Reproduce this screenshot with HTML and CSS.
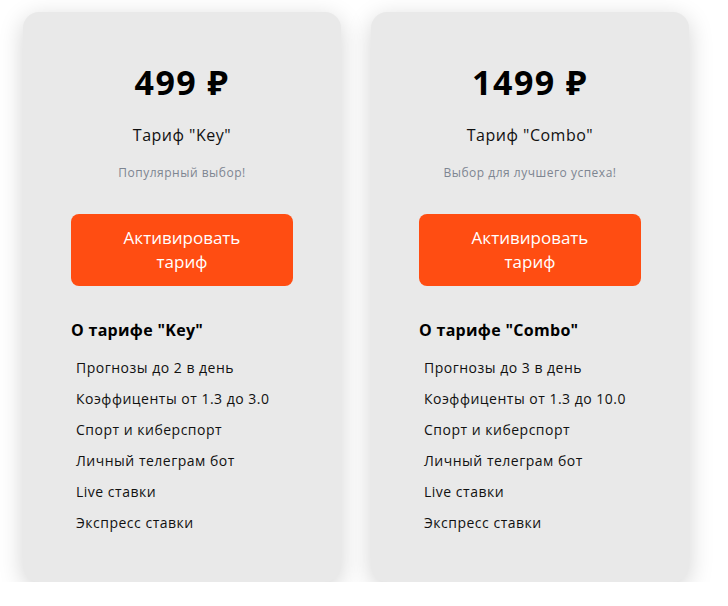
FILE: index.html
```html
<!DOCTYPE html>
<html lang="ru">
  <head>
    <meta charset="UTF-8" />
    <meta name="viewport" content="width=device-width, initial-scale=1.0" />
    <title>Тарифы</title>
    <link rel="stylesheet" href="styles.css">
  </head>
  <body>
    <main class="plans">
      <section class="plan">
        <div class="price">499 ₽</div>
        <div class="plan-name">Тариф "Key"</div>
        <div class="plan-note">Популярный выбор!</div>
        <button class="activate">Активировать тариф</button>
        <h4 class="about">О тарифе "Key"</h4>
        <ul class="features">
          <li>Прогнозы до 2 в день</li>
          <li>Коэффиценты от 1.3 до 3.0</li>
          <li>Спорт и киберспорт</li>
          <li>Личный телеграм бот</li>
          <li>Live ставки</li>
          <li>Экспресс ставки</li>
        </ul>
      </section>

      <section class="plan">
        <div class="price">1499 ₽</div>
        <div class="plan-name">Тариф "Combo"</div>
        <div class="plan-note">Выбор для лучшего успеха!</div>
        <button class="activate">Активировать тариф</button>
        <h4 class="about">О тарифе "Combo"</h4>
        <ul class="features">
          <li>Прогнозы до 3 в день</li>
          <li>Коэффиценты от 1.3 до 10.0</li>
          <li>Спорт и киберспорт</li>
          <li>Личный телеграм бот</li>
          <li>Live ставки</li>
          <li>Экспресс ставки</li>
        </ul>
      </section>
    </main>
  </body>
</html>
```

FILE: styles.css
```css
body {
  margin: 0;
  font-family: "Open Sans", "Noto Sans", sans-serif;
  background-color: #ffffff;
  color: #111;
}

.plans {
  display: flex;
  gap: 30px;
  padding: 12px 0 0 23px;
}

.plan {
  width: 318px;
  height: 570px;
  box-sizing: border-box;
  padding: 58px 48px 0;
  background-color: #e9e9e9;
  border-radius: 16px;
  box-shadow: 0 6px 24px rgba(0, 0, 0, 0.18);
  display: flex;
  flex-direction: column;
}

.price {
  text-align: center;
  font-size: 34px;
  font-weight: 700;
  line-height: 24px;
  letter-spacing: 1.5px;
  color: #000;
}

.plan-name {
  margin-top: 30px;
  text-align: center;
  font-size: 16px;
  line-height: 22px;
  letter-spacing: 0.5px;
}

.plan-note {
  margin-top: 18px;
  text-align: center;
  font-size: 12px;
  line-height: 18px;
  letter-spacing: 0.5px;
  color: #7d8591;
}

.activate {
  margin-top: 32px;
  height: 72px;
  padding: 0 40px;
  border: none;
  border-radius: 8px;
  background-color: #ff4d12;
  color: #fff;
  font-family: inherit;
  font-size: 17px;
  line-height: 24px;
  cursor: pointer;
}

.about {
  margin: 33px 0 0;
  font-size: 16px;
  font-weight: 700;
  line-height: 22px;
  letter-spacing: 0.3px;
  color: #000;
}

.features {
  list-style: none;
  margin: 17px 0 0;
  padding: 0 0 0 5px;
}

.features li {
  font-size: 14px;
  line-height: 20px;
  letter-spacing: 0.5px;
  margin-bottom: 11px;
}
```
